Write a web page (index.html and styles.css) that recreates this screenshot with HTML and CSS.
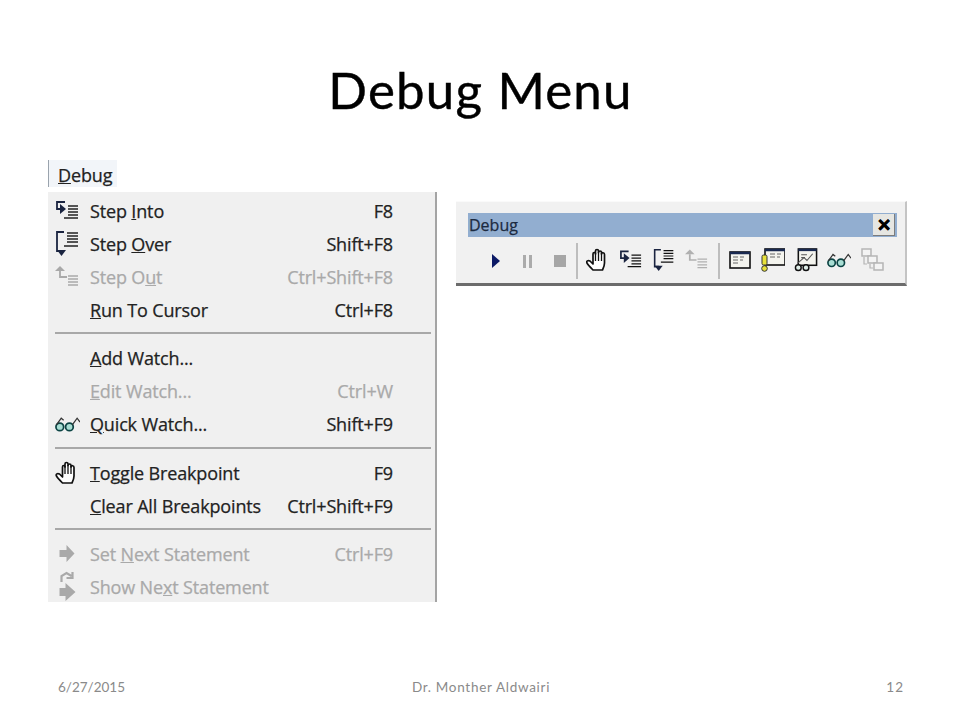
FILE: index.html
```html
<!DOCTYPE html>
<html lang="en">
<head>
    <meta charset="UTF-8">
    <title>Debug Menu</title>
    <link rel="stylesheet" href="styles.css">
</head>
<body>
    <svg class="defs" width="0" height="0">
        <symbol id="i-into" viewBox="0 0 25 22">
            <path d="M10 2H2v7h4" fill="none" stroke="#1a2440" stroke-width="1.800"/>
            <path d="M5 4l6 5-6 5z" fill="#1a2440"/>
            <path d="M13 6h10M13 9h10M13 12h10M13 15h10M9 18h14" stroke="currentColor" stroke-width="1.300"/>
        </symbol>
        <symbol id="i-over" viewBox="0 0 25 27">
            <path d="M9 2H2v19h5" fill="none" stroke="#1a2440" stroke-width="1.800"/>
            <path d="M2 20h9l-4.500 6z" fill="#1a2440"/>
            <path d="M12 3h11M12 6h11M12 9h11M12 12h11M9 16h14" stroke="currentColor" stroke-width="1.400"/>
        </symbol>
        <symbol id="i-out" viewBox="0 0 25 22">
            <path d="M5 5v6h7" fill="none" stroke="currentColor" stroke-width="1.800"/>
            <path d="M5 0l5 5H0z" fill="currentColor"/>
            <path d="M13 10h10M13 13h10M13 16h10M13 19h10" stroke="currentColor" stroke-width="1.300"/>
        </symbol>
        <symbol id="i-hand" viewBox="0 0 24 24">
            <path d="M7 22c-2-2-5-5-6-7-1-2 1-3 3-2l3 3V6c0-2 2.500-2 2.500 0V3c0-2 3-2 3 0v1.500c0-2 3-2 3 0V6c0-2 3-1.500 3 .5V15c0 3-1 5-2 7z" fill="#fff" stroke="#111" stroke-width="1.700" stroke-linejoin="round"/>
            <path d="M9.500 5v8M12.500 4v9M15.500 5v8" stroke="#111" stroke-width="1.300"/>
        </symbol>
        <symbol id="i-glasses" viewBox="0 0 26 18">
            <circle cx="5" cy="12" r="4" fill="#a9ded4" stroke="#0c4444" stroke-width="1.800"/>
            <circle cx="15" cy="12" r="4" fill="#a9ded4" stroke="#0c4444" stroke-width="1.800"/>
            <path d="M1.500 10l5-7 2.500 2M18 10l5-7 3 4" fill="none" stroke="#333" stroke-width="1.300"/>
        </symbol>
        <symbol id="i-arrow" viewBox="0 0 20 20">
            <path d="M2 6h7V1l8 8.500L9 18v-5H2z" fill="currentColor"/>
        </symbol>
        <symbol id="i-shownext" viewBox="0 0 20 32">
            <path d="M4 11V5l5-3 5 3M15 1v6h-6" fill="none" stroke="currentColor" stroke-width="2.200"/>
            <path d="M2 17h6v-5l10 9-10 9v-5H2z" fill="currentColor"/>
        </symbol>
        <symbol id="i-win" viewBox="0 0 24 24">
            <rect x="2" y="4" width="20" height="16" fill="#f4f4ee" stroke="#111" stroke-width="1.600"/>
            <path d="M2 5h20" stroke="#1a2a50" stroke-width="2.500"/>
            <path d="M5 9h5M12 9h4M5 12h5M12 12h3M5 15h5" stroke="#666" stroke-width="1"/>
        </symbol>
        <symbol id="i-win2" viewBox="0 0 24 24">
            <rect x="4" y="1" width="20" height="16" fill="#f4f4ee" stroke="#111" stroke-width="1.600"/>
            <path d="M4 2h20" stroke="#1a2a50" stroke-width="2.500"/>
            <path d="M9 6h5M16 6h4M9 9h5M16 9h3" stroke="#666" stroke-width="1"/>
            <rect x="1" y="7" width="5" height="10" rx="1.500" fill="#e8e23a" stroke="#333"/>
            <circle cx="3.500" cy="20.500" r="2.800" fill="#e8e23a" stroke="#333"/>
        </symbol>
        <symbol id="i-win3" viewBox="0 0 24 25">
            <rect x="4" y="1" width="19" height="17" fill="#f4f4ee" stroke="#111" stroke-width="1.600"/>
            <path d="M4 2h19" stroke="#1a2a50" stroke-width="2.500"/>
            <path d="M7 7h6M7 10h4M3 16l7-6 3 3 6-7" fill="none" stroke="#555" stroke-width="1.100"/>
            <circle cx="4" cy="20.500" r="3" fill="#dfeee8" stroke="#111" stroke-width="1.500"/>
            <circle cx="12" cy="20.500" r="3" fill="#dfeee8" stroke="#111" stroke-width="1.500"/>
        </symbol>
        <symbol id="i-stack" viewBox="0 0 24 24">
            <g fill="#f4f4f4" stroke="#b5b5b5" stroke-width="1.500">
                <rect x="2" y="1" width="9" height="7"/>
                <rect x="8" y="8" width="9" height="7"/>
                <rect x="14" y="15" width="9" height="7"/>
            </g>
            <path d="M4 9v7h3M10 16v4h3" fill="none" stroke="#b5b5b5" stroke-width="1.200"/>
        </symbol>
    </svg>

    <div class="slide">
        <h1>Debug Menu</h1>

        <div class="content">
            <div class="menu-wrap">
                <div class="menu-head"><span><u>D</u>ebug</span></div>
                <div class="menu">
                    <div class="item"><svg class="ico ico-into"><use href="#i-into"/></svg><span class="label">Step <u>I</u>nto</span><span class="key">F8</span></div>
                    <div class="item"><svg class="ico ico-over"><use href="#i-over"/></svg><span class="label">Step <u>O</u>ver</span><span class="key">Shift+F8</span></div>
                    <div class="item off"><svg class="ico ico-into"><use href="#i-out"/></svg><span class="label">Step O<u>u</u>t</span><span class="key">Ctrl+Shift+F8</span></div>
                    <div class="item"><span class="ico"></span><span class="label"><u>R</u>un To Cursor</span><span class="key">Ctrl+F8</span></div>
                    <div class="sep"></div>
                    <div class="item"><span class="ico"></span><span class="label"><u>A</u>dd Watch...</span></div>
                    <div class="item off"><span class="ico"></span><span class="label"><u>E</u>dit Watch...</span><span class="key">Ctrl+W</span></div>
                    <div class="item"><svg class="ico ico-into"><use href="#i-glasses"/></svg><span class="label"><u>Q</u>uick Watch...</span><span class="key">Shift+F9</span></div>
                    <div class="sep"></div>
                    <div class="item"><svg class="ico ico-hand"><use href="#i-hand"/></svg><span class="label"><u>T</u>oggle Breakpoint</span><span class="key">F9</span></div>
                    <div class="item"><span class="ico"></span><span class="label"><u>C</u>lear All Breakpoints</span><span class="key">Ctrl+Shift+F9</span></div>
                    <div class="sep"></div>
                    <div class="item off"><svg class="ico ico-arrow"><use href="#i-arrow"/></svg><span class="label">Set <u>N</u>ext Statement</span><span class="key">Ctrl+F9</span></div>
                    <div class="item off"><svg class="ico ico-show"><use href="#i-shownext"/></svg><span class="label">Show Ne<u>x</u>t Statement</span></div>
                </div>
            </div>

            <div class="toolbar">
                <div class="tb-title">
                    <span>Debug</span>
                    <span class="tb-close">&#10005;</span>
                </div>
                <div class="tb-row">
                    <span class="tb-play"></span>
                    <span class="tb-pause"></span>
                    <span class="tb-stop"></span>
                    <span class="tb-sep"></span>
                    <svg class="tb-ico"><use href="#i-hand"/></svg>
                    <svg class="tb-ico dark"><use href="#i-into"/></svg>
                    <svg class="tb-ico dark"><use href="#i-over"/></svg>
                    <svg class="tb-ico faded"><use href="#i-out"/></svg>
                    <span class="tb-sep"></span>
                    <svg class="tb-ico"><use href="#i-win"/></svg>
                    <svg class="tb-ico"><use href="#i-win2"/></svg>
                    <svg class="tb-ico"><use href="#i-win3"/></svg>
                    <svg class="tb-ico"><use href="#i-glasses"/></svg>
                    <svg class="tb-ico"><use href="#i-stack"/></svg>
                </div>
            </div>
        </div>

        <div class="footer">
            <span>6/27/2015</span>
            <span class="footer-mid">Dr. Monther Aldwairi</span>
            <span class="footer-num">12</span>
        </div>
    </div>
</body>
</html>
```

FILE: styles.css
```css
body {
    margin: 0;
    background: #fff;
    font-family: "Open Sans", sans-serif;
}
.defs {
    position: absolute;
}
.slide {
    width: 960px;
    height: 720px;
    display: flex;
    flex-direction: column;
    overflow: hidden;
}
h1 {
    margin: 0;
    padding: 60px 0 0 1px;
    height: 100px;
    box-sizing: border-box;
    line-height: 60px;
    font-family: Lato, sans-serif;
    font-size: 51px;
    font-weight: 400;
    letter-spacing: 1.2px;
    text-align: center;
    color: #000;
    -webkit-text-stroke: 0.4px #000;
}
.content {
    display: flex;
    align-items: flex-start;
    gap: 19px;
    padding: 60px 0 0 48px;
    height: 510px;
    box-sizing: border-box;
    color: #222;
}
.menu-wrap {
    width: 389px;
}
.menu-head {
    height: 27px;
    width: 69px;
    margin-bottom: 5px;
    padding-left: 9px;
    box-sizing: border-box;
    background: #f2f5f9;
    border-left: 1px solid #9aa3ad;
    font-size: 18px;
    letter-spacing: -0.15px;
    line-height: 30px;
    -webkit-text-stroke: 0.25px currentColor;
}
.menu {
    height: 410px;
    padding: 2px 4px 0 7px;
    box-sizing: border-box;
    background: #f0f0f0;
    border-right: 2px solid #a4a4a4;
    font-size: 18px;
    letter-spacing: -0.15px;
    -webkit-text-stroke: 0.25px currentColor;
}
.item {
    display: flex;
    align-items: center;
    height: 33px;
}
.off {
    color: #a9a9a9;
}
.ico {
    flex: none;
    width: 25px;
    height: 22px;
    margin-right: 10px;
}
.ico-over {
    height: 27px;
}
.ico-hand {
    height: 24px;
}
.ico-arrow {
    height: 20px;
}
.ico-show {
    height: 32px;
}
.label {
    flex: 1;
}
.key {
    padding-right: 38px;
}
.sep {
    height: 2px;
    margin: 6px 0 7.5px;
    background: #a8a8a8;
}
.toolbar {
    width: 451px;
    height: 85px;
    margin-top: 41px;
    padding: 11px 8px 0 12px;
    box-sizing: border-box;
    background: #f1f1f1;
    border-top: 1px solid #fafafa;
    border-bottom: 3px solid #6c6c6c;
    border-right: 2px solid #c4c4c4;
}
.tb-title {
    display: flex;
    align-items: center;
    justify-content: space-between;
    height: 24px;
    padding-left: 1px;
    background: #92aed0;
    color: #1c2a40;
    font-size: 16px;
    -webkit-text-stroke: 0.25px currentColor;
}
.tb-close {
    width: 22px;
    height: 22px;
    margin-right: 2px;
    background: #e6e6e2;
    border-right: 1px solid #7c7c7c;
    border-bottom: 1px solid #7c7c7c;
    box-sizing: border-box;
    color: #000;
    font-size: 17px;
    font-weight: 700;
    line-height: 21px;
    text-align: center;
    -webkit-text-stroke: 0.6px #000;
}
.tb-row {
    display: flex;
    align-items: center;
    height: 48px;
    padding-left: 24px;
}
.tb-play {
    width: 0;
    height: 0;
    border-left: 8px solid #0c1a66;
    border-top: 7px solid transparent;
    border-bottom: 7px solid transparent;
    margin-right: 23px;
}
.tb-pause {
    width: 3px;
    height: 13px;
    border-left: 3px solid #ababab;
    border-right: 3px solid #ababab;
    margin-right: 22px;
}
.tb-stop {
    width: 12px;
    height: 12px;
    background: #a6a6a6;
    margin-right: 10px;
}
.tb-sep {
    width: 2px;
    height: 36px;
    background: #bdbdbd;
    margin-right: 8px;
}
.tb-ico {
    width: 24px;
    height: 24px;
    margin-right: 9px;
    margin-top: -3px;
}
.dark {
    color: #111;
}
.faded {
    color: #b0b0b0;
}
.footer {
    display: grid;
    grid-template-columns: 1fr auto 1fr;
    align-items: center;
    margin-top: auto;
    margin-bottom: 21px;
    padding: 0 56px 0 58px;
    height: 24px;
    font-family: Lato, sans-serif;
    font-size: 13.500px;
    color: #8a8a8a;
}
.footer-mid {
    letter-spacing: 0.7px;
}
.footer-num {
    text-align: right;
    letter-spacing: 1px;
}
```
